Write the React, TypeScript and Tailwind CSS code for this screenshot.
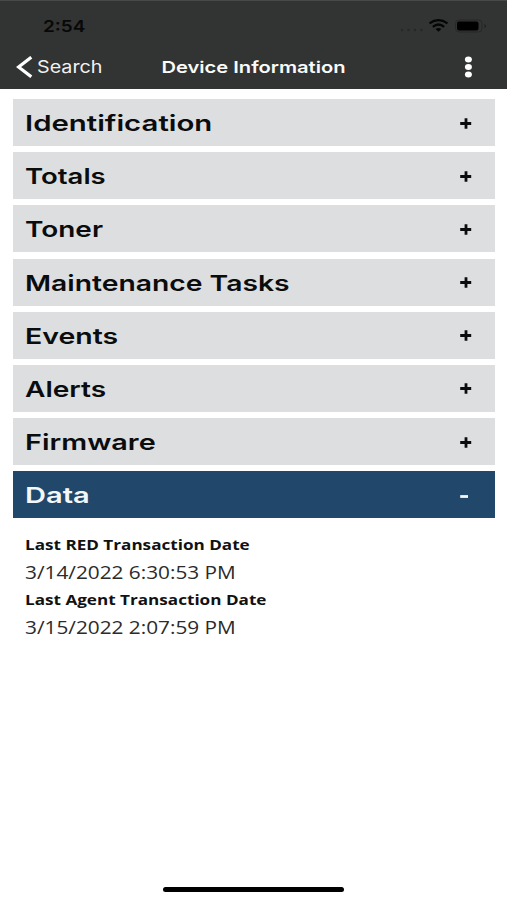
import { useState } from "react";
import { clsx } from "clsx";

interface Section {
  title: string;
  titleClass: string;
}

const SECTIONS: Section[] = [
  { title: "Identification", titleClass: "scale-x-[1.335]" },
  { title: "Totals", titleClass: "scale-x-[1.25]" },
  { title: "Toner", titleClass: "scale-x-[1.27]" },
  { title: "Maintenance Tasks", titleClass: "scale-x-[1.285]" },
  { title: "Events", titleClass: "scale-x-[1.295]" },
  { title: "Alerts", titleClass: "scale-x-[1.275]" },
  { title: "Firmware", titleClass: "scale-x-[1.31]" },
  { title: "Data", titleClass: "scale-x-[1.32]" },
];

const DATA_FIELDS = [
  { label: "Last RED Transaction Date", value: "3/14/2022 6:30:53 PM" },
  { label: "Last Agent Transaction Date", value: "3/15/2022 2:07:59 PM" },
];

function StatusIcons() {
  return (
    <svg width="90" height="20" viewBox="0 0 90 20" className="shrink-0">
      <g fill="#262727">
        <circle cx="5" cy="14" r="1.2" />
        <circle cx="11.5" cy="14" r="1.2" />
        <circle cx="18" cy="14" r="1.2" />
        <circle cx="24.5" cy="14" r="1.2" />
      </g>
      <g fill="none" stroke="#050505" strokeWidth="2.2">
        <path d="M32.5 7.3 Q41.5 1 50.5 7.3" />
        <path d="M35.8 10.8 Q41.5 6.2 47.2 10.8" />
      </g>
      <path d="M38.6 13 Q41.5 10.8 44.4 13 L41.5 15.8 Z" fill="#050505" />
      <rect x="58.5" y="4" width="26.5" height="12" rx="3.5" fill="none" stroke="#262727" />
      <rect x="60" y="5.5" width="21.5" height="9" rx="2" fill="#000" />
      <path d="M87.5 8 Q90.5 10 87.5 12 Z" fill="#1d1e1e" />
    </svg>
  );
}

function Header() {
  return (
    <header className="h-[89px] shrink-0 border-t border-[#484949] bg-[#323333] font-['Inter','Liberation_Sans',sans-serif]">
      <div className="flex h-[44px] items-center justify-between pt-[5px] pr-[20px] pl-[43px]">
        <span className="origin-left scale-x-[1.18] text-[16px] font-semibold text-[#080808]">2:54</span>
        <StatusIcons />
      </div>
      <div className="grid h-[44px] grid-cols-[1fr_auto_1fr] items-center">
        <button type="button" className="flex items-center pl-[16px] text-white">
          <svg width="17" height="22" viewBox="0 0 17 22" fill="none" stroke="currentColor" strokeWidth="3.2">
            <path d="M15.3 1.2 L2.6 11 L15.3 20.8" />
          </svg>
          <span className="mt-[2px] ml-[4px] origin-left scale-x-[1.16] text-[17px] text-[#f1f1f1]">Search</span>
        </button>
        <h1 className="scale-x-[1.22] text-[16.5px] font-semibold text-[#fafafa]">Device Information</h1>
        <button type="button" aria-label="More" className="justify-self-end pr-[35px] text-white">
          <svg width="8" height="22" viewBox="0 0 8 22" fill="currentColor">
            <ellipse cx="4.4" cy="3.4" rx="3.5" ry="3" />
            <ellipse cx="4.4" cy="11" rx="3.5" ry="3" />
            <ellipse cx="4.4" cy="18.6" rx="3.5" ry="3" />
          </svg>
        </button>
      </div>
    </header>
  );
}

export default function App() {
  const [open, setOpen] = useState("Data");

  return (
    <div className="flex h-[900px] w-[507px] flex-col overflow-hidden bg-white">
      <Header />
      <main className="flex flex-1 flex-col gap-[6.2px] pt-[10px] pr-[12px] pl-[13px]">
        {SECTIONS.map(({ title, titleClass }) => {
          const active = open === title;
          return (
            <button
              key={title}
              type="button"
              onClick={() => setOpen(active ? "" : title)}
              className={clsx(
                "flex h-[47px] shrink-0 items-center justify-between pt-[2px] pr-[23.5px] pl-[12px] font-['Inter','Liberation_Sans',sans-serif]",
                active ? "bg-[#21476b] text-[#f4f7fa]" : "bg-[#dddee0] text-[#0b0c0d]",
              )}
            >
              <span className={clsx("origin-left text-[22px] font-semibold whitespace-nowrap", titleClass)}>
                {title}
              </span>
              <svg width="13" height="12" viewBox="0 0 13 12" stroke="currentColor" strokeWidth="2.8">
                {active ? <path d="M1.2 6.5 H9" /> : <path d="M1.2 5.5 H12.2 M7 0.3 V10.7" />}
              </svg>
            </button>
          );
        })}
        {open === "Data" && (
          <dl className="mt-[6.5px] pl-[12px] font-['Open_Sans',sans-serif]">
            {DATA_FIELDS.map((field) => (
              <div key={field.label} className="flex h-[55.3px] flex-col items-start">
                <dt className="h-[27px] origin-left scale-x-[1.18] text-[14.5px] leading-[27px] font-bold whitespace-nowrap text-[#111]">
                  {field.label}
                </dt>
                <dd className="h-[28px] origin-left scale-x-[1.155] text-[18px] leading-[28px] whitespace-nowrap text-[#2b2b2b]">
                  {field.value}
                </dd>
              </div>
            ))}
          </dl>
        )}
      </main>
      <footer className="flex h-[13px] shrink-0 justify-center">
        <div className="h-[5px] w-[181px] rounded-full bg-black" />
      </footer>
    </div>
  );
}
